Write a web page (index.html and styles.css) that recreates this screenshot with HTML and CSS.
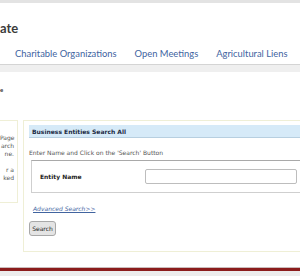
FILE: index.html
```html
<!DOCTYPE html>
<html lang="en">
<head>
  <meta charset="UTF-8">
  <title>Business Entities Search</title>
  <link rel="stylesheet" href="styles.css">
</head>
<body>
  <div class="topbar"></div>

  <!-- Header: site title and main navigation -->
  <header class="site-header">
    <div class="site-title">ate</div>
    <nav class="main-nav">
      <a href="#">Charitable Organizations</a>
      <a href="#">Open Meetings</a>
      <a href="#">Agricultural Liens</a>
    </nav>
  </header>
  <div class="header-shade"></div>

  <div class="page">
    <div class="page-title">e</div>

    <div class="columns">
      <!-- Left help text (only its right edge is in view) -->
      <div class="side-box">
        <p>Page<br>arch<br>ne.</p>
        <p>r a<br>ked</p>
      </div>

      <!-- Search form -->
      <div class="search-box">
        <div class="search-head">Business Entities Search All</div>
        <p class="hint">Enter Name and Click on the 'Search' Button</p>
        <div class="field-set">
          <label for="entityName">Entity Name</label>
          <input type="text" id="entityName">
        </div>
        <a class="adv-link" href="#">Advanced Search&gt;&gt;</a>
        <button class="search-btn">Search</button>
      </div>
    </div>
  </div>

  <footer class="site-footer"></footer>
</body>
</html>
```

FILE: styles.css
```css
* {
  box-sizing: border-box;
}
body {
  margin: 0;
  width: 300px;
  height: 276px;
  overflow: hidden;
  background-color: #fff;
  font-family: 'DejaVu Sans', Verdana, sans-serif;
}
.topbar {
  height: 3px;
  background-color: #e3e3e3;
}
/* --- Header --- */
.site-header {
  height: 61px;
  background-color: #fff;
}
.site-title {
  padding-top: 17px;
  height: 45px;
  font-family: Lato, 'Open Sans', sans-serif;
  font-weight: bold;
  font-size: 13px;
  color: #3b3b3b;
}
.main-nav {
  display: flex;
  gap: 18px;
  padding-left: 15px;
  white-space: nowrap;
}
.main-nav a {
  font-family: Lato, 'Open Sans', sans-serif;
  font-size: 9.4px;
  color: #41649f;
  text-decoration: none;
}
.header-shade {
  height: 8px;
  border-top: 1px solid #d4d4d4;
  background-color: #efefef;
}
/* --- Content --- */
.page {
  width: 420px;
}
.page-title {
  padding-top: 14px;
  height: 48px;
  font-family: Lato, sans-serif;
  font-weight: bold;
  font-size: 6px;
  color: #333;
}
.columns {
  display: flex;
  gap: 5px;
  align-items: flex-start;
}
.side-box {
  width: 19px;
  margin-left: -1px;
  height: 83px;
  padding: 13px 3px 0 0;
  border: 1px solid #efefd6;
  font-size: 6px;
  line-height: 8px;
  color: #555;
  text-align: right;
}
.side-box p {
  margin: 0 0 8px;
}
.search-box {
  flex: 1;
  height: 132px;
  padding: 4px 5px 0;
  border: 1px solid #efefd6;
}
.search-head {
  height: 13px;
  padding: 3px 3px 0;
  background-color: #d6eaf8;
  border-bottom: 1px solid #b7cfe0;
  font-size: 6px;
  font-weight: bold;
  color: #1c2a44;
}
.hint {
  margin: 11px 0 0;
  font-size: 6px;
  color: #555;
}
.field-set {
  display: flex;
  align-items: center;
  margin: 4px 0 0 2px;
  height: 33px;
  padding-left: 8px;
  border: 1px solid #cfcfcf;
  border-top-color: #a9a9a9;
}
.field-set label {
  width: 105px;
  font-size: 6px;
  font-weight: bold;
  color: #222;
}
.field-set input {
  width: 152px;
  height: 15px;
  margin: 0;
  border: 1px solid #bdbdbd;
  border-radius: 2px;
}
.adv-link {
  display: block;
  margin: 12px 0 0 4px;
  font-size: 6px;
  font-style: italic;
  color: #41649f;
}
.search-btn {
  display: block;
  margin-top: 9px;
  width: 27px;
  height: 15px;
  padding: 0;
  background-color: #e4e4e4;
  border: 1px solid #a8a8a8;
  border-radius: 3px;
  font-family: 'DejaVu Sans', sans-serif;
  font-size: 6px;
  color: #222;
}
/* --- Footer --- */
.site-footer {
  margin-top: 15px;
  height: 4px;
  border-top: 1px solid #cbbcbc;
  background-color: #8b1c1c;
  box-shadow: 0 10px 0 10px #ececec;
}
```
